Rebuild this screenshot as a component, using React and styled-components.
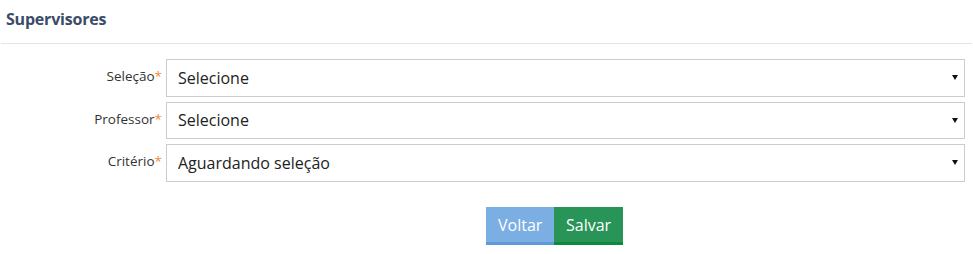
import React from "react";
import styled, { createGlobalStyle } from "styled-components";

const Global = createGlobalStyle`
  html, body { margin: 0; padding: 0; background: #fff; }
  body { font-family: "Open Sans", "Liberation Sans", sans-serif; }
  * { box-sizing: border-box; }
`;

const Page = styled.div`
  width: 973px;
  padding: 0 1px;
`;

const Header = styled.div`
  height: 44px;
  border-bottom: 1px solid #e5e5e5;
  display: flex;
  align-items: center;
  padding: 0 5px 6px;
`;

const Title = styled.h1`
  margin: 0;
  font-size: 16px;
  font-weight: 700;
  color: #3a4c69;
  letter-spacing: -0.2px;
`;

const Form = styled.form`
  padding: 15px 7px 0 0;
  display: flex;
  flex-direction: column;
  gap: 5px;
`;

const Row = styled.div`
  display: flex;
  align-items: flex-start;
`;

const Label = styled.label`
  width: 165px;
  flex: none;
  text-align: right;
  padding: 7px 4px 0 0;
  font-size: 13.5px;
  color: #333;
  line-height: 20px;
`;

const Req = styled.span`
  color: #f5883b;
`;

const SelectWrap = styled.div`
  position: relative;
  flex: 1;
`;

const Select = styled.select`
  appearance: none;
  -webkit-appearance: none;
  width: 100%;
  height: 37.5px;
  border: 1px solid #cccccc;
  border-radius: 0;
  background: #fff;
  padding: 0 30px 0 11px;
  font-family: "Open Sans", "Liberation Sans", sans-serif;
  font-size: 16px;
  color: #222;
  outline: none;
`;

const Arrow = styled.svg`
  position: absolute;
  right: 7px;
  top: 16px;
  pointer-events: none;
`;

const Actions = styled.div`
  display: flex;
  padding-left: 485px;
  margin-top: 20px;
`;

const Button = styled.button`
  height: 38px;
  border: none;
  border-bottom: 3px solid ${(p) => p.$border};
  background: ${(p) => p.$bg};
  color: #fff;
  font-family: "Open Sans", "Liberation Sans", sans-serif;
  font-size: 16px;
  padding: 1px 12px 0;
  border-radius: 0;
  width: ${(p) => p.$w}px;
  cursor: pointer;
`;

const fields = [
  { label: "Seleção", value: "Selecione" },
  { label: "Professor", value: "Selecione" },
  { label: "Critério", value: "Aguardando seleção" },
];

export default function App() {
  return (
    <Page>
      <Global />
      <Header>
        <Title>Supervisores</Title>
      </Header>
      <Form onSubmit={(e) => e.preventDefault()}>
        {fields.map((f) => (
          <Row key={f.label}>
            <Label>
              {f.label}
              <Req>*</Req>
            </Label>
            <SelectWrap>
              <Select defaultValue={f.value}>
                <option>{f.value}</option>
              </Select>
              <Arrow width="6" height="5" viewBox="0 0 6 5">
                <path d="M0 0 H6 L3 5 Z" fill="#111" />
              </Arrow>
            </SelectWrap>
          </Row>
        ))}
        <Actions>
          <Button type="button" $bg="#7baee2" $border="#5f9bd8" $w={68}>
            Voltar
          </Button>
          <Button type="submit" $bg="#299457" $border="#0e8a3c" $w={69}>
            Salvar
          </Button>
        </Actions>
      </Form>
    </Page>
  );
}
